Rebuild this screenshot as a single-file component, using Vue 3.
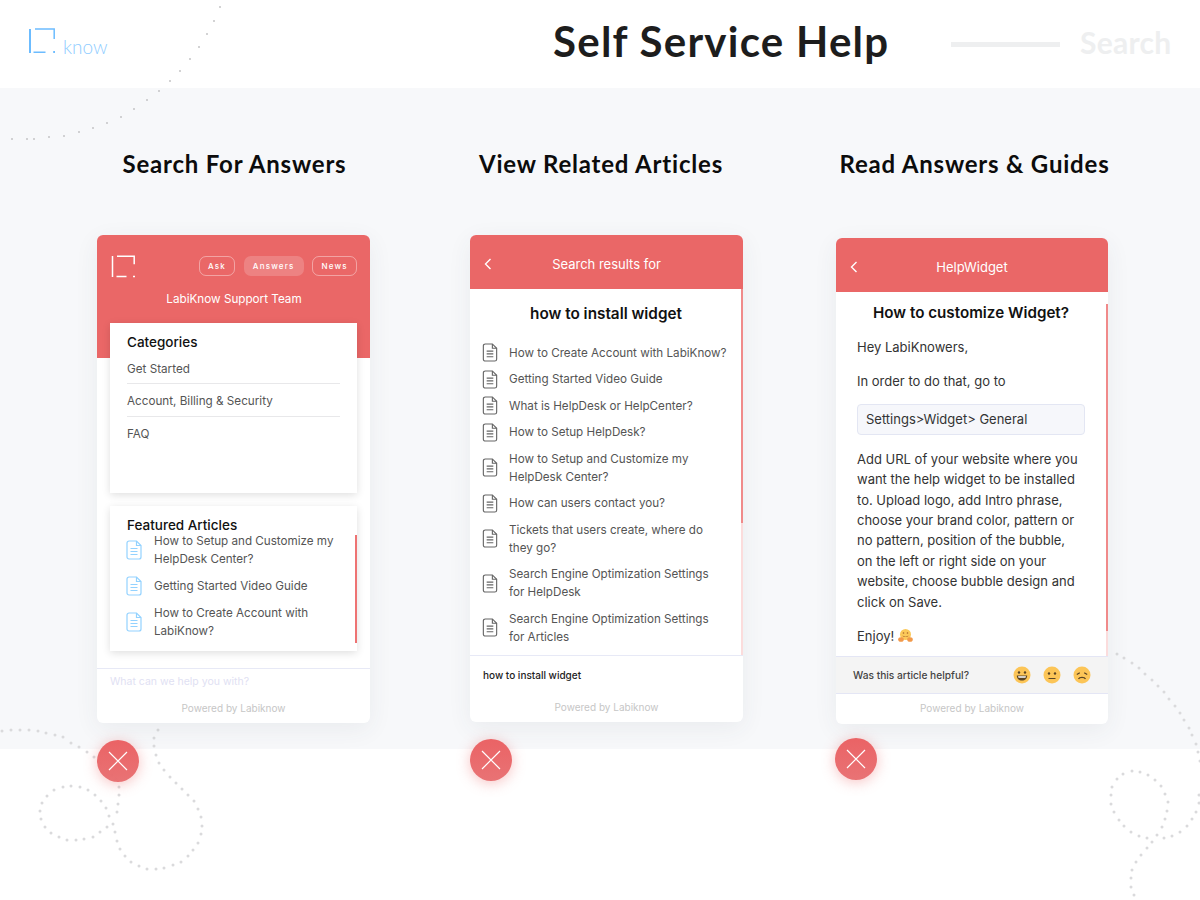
<template>
  <div class="page">
    <svg class="dots" width="1200" height="900" viewBox="0 0 1200 900">
      <circle v-for="(p, i) in thinDots" :key="'t' + i" :cx="p[0]" :cy="p[1]" r="1" fill="#c4c4c6" />
      <circle v-for="(p, i) in bigDots" :key="'b' + i" :cx="p[0]" :cy="p[1]" r="1.5" fill="#dadadc" />
    </svg>

    <header class="top">
      <div class="logo">
        <svg width="26" height="26" viewBox="0 0 26 26" fill="none" stroke="#6cbcff" stroke-width="1.500">
          <path d="M1 1v24" stroke-width="2" />
          <path d="M4.500 24.300h12M6 1h19.200v10" />
          <path d="M24.200 24h2" stroke-width="2" />
        </svg>
        <span class="logo-word">know</span>
      </div>
      <h1 class="page-title">Self Service Help</h1>
      <div class="search-line"></div>
      <div class="search-word">Search</div>
    </header>

    <main class="band">
      <section class="col col-1">
        <h2 class="col-title">Search For Answers</h2>
        <div class="phone">
          <div class="hero">
            <div class="hero-top">
              <svg width="24" height="24" viewBox="0 0 24 24" fill="none" stroke="#fff" stroke-width="1.500">
                <path d="M1.500 1v21M5.500 21.500h10M6 1.200h17.200v8" />
                <path d="M22 21.500h2" />
              </svg>
              <div class="tabs">
                <span class="tab">Ask</span>
                <span class="tab tab-on">Answers</span>
                <span class="tab">News</span>
              </div>
            </div>
            <div class="hero-name">LabiKnow Support Team</div>
          </div>
          <div class="box box-cats">
            <div class="box-title">Categories</div>
            <div v-for="c in categories" :key="c" class="cat">{{ c }}</div>
          </div>
          <div class="box box-feat">
            <div class="box-title">Featured Articles</div>
            <div class="feat-list">
              <div v-for="f in featured" :key="f" class="feat">
                <svg class="doc" width="16" height="20" viewBox="0 0 16 20" fill="none" stroke="#93d2ff" stroke-width="1.200">
                  <path d="M3 1h7.500L15 5.500V17a2 2 0 0 1-2 2H3a2 2 0 0 1-2-2V3a2 2 0 0 1 2-2z" />
                  <path d="M10.500 1v4.500H15M4.500 8.500h7M4.500 11.500h7M4.500 14.500h7" />
                </svg>
                <span>{{ f }}</span>
              </div>
            </div>
            <div class="feat-bar"></div>
          </div>
          <div class="foot foot-1">
            <div class="ask">What can we help you with?</div>
            <div class="powered">Powered by Labiknow</div>
          </div>
        </div>
        <button class="close close-1">
          <svg width="20" height="20" viewBox="0 0 20 20" stroke="#fff" stroke-width="1.200"><path d="M1 1l18 18M19 1L1 19" /></svg>
        </button>
      </section>

      <section class="col col-2">
        <h2 class="col-title">View Related Articles</h2>
        <div class="phone">
          <div class="bar">
            <svg class="back" width="8" height="12" viewBox="0 0 8 12" fill="none" stroke="#fff" stroke-width="1.400"><path d="M6.500 1L1.500 6l5 5" /></svg>
            <span>Search results for</span>
          </div>
          <div class="results">
            <div class="query">how to install widget</div>
            <div class="result-list">
              <div v-for="r in results" :key="r" class="result">
                <svg class="doc" width="16" height="19" viewBox="0 0 16 20" fill="none" stroke="#666" stroke-width="1.200">
                  <path d="M3 1h7.500L15 5.500V17a2 2 0 0 1-2 2H3a2 2 0 0 1-2-2V3a2 2 0 0 1 2-2z" />
                  <path d="M10.500 1v4.500H15M4.500 8.500h7M4.500 11.500h7M4.500 14.500h7" />
                </svg>
                <span>{{ r }}</span>
              </div>
            </div>
            <div class="scroll scroll-2"></div>
          </div>
          <div class="foot foot-2">
            <div class="typed">how to install widget</div>
            <div class="powered">Powered by Labiknow</div>
          </div>
        </div>
        <button class="close close-2">
          <svg width="20" height="20" viewBox="0 0 20 20" stroke="#fff" stroke-width="1.200"><path d="M1 1l18 18M19 1L1 19" /></svg>
        </button>
      </section>

      <section class="col col-3">
        <h2 class="col-title">Read Answers &amp; Guides</h2>
        <div class="phone">
          <div class="bar">
            <svg class="back" width="8" height="12" viewBox="0 0 8 12" fill="none" stroke="#fff" stroke-width="1.400"><path d="M6.500 1L1.500 6l5 5" /></svg>
            <span>HelpWidget</span>
          </div>
          <div class="article">
            <div class="article-title">How to customize Widget?</div>
            <p class="hey">Hey LabiKnowers,</p>
            <p class="order">In order to do that, go to</p>
            <div class="code">Settings&gt;Widget&gt; General</div>
            <p class="para">Add URL of your website where you want the help widget to be installed to. Upload logo, add Intro phrase, choose your brand color, pattern or no pattern, position of the bubble, on the left or right side on your website, choose bubble design and click on Save.</p>
            <p class="enjoy">Enjoy!
              <svg class="hug" width="15" height="15" viewBox="0 0 15 15">
                <circle cx="7.500" cy="6.500" r="5.500" fill="#fbc95a" />
                <path d="M4.500 7.500c1.500 1.500 4.500 1.500 6 0-.5 2-5.500 2-6 0z" fill="#a8632a" />
                <circle cx="5.500" cy="5" r=".8" fill="#a8632a" />
                <circle cx="9.500" cy="5" r=".8" fill="#a8632a" />
                <ellipse cx="3" cy="11.500" rx="2.800" ry="2.300" fill="#f2994a" />
                <ellipse cx="12" cy="11.500" rx="2.800" ry="2.300" fill="#f2994a" />
              </svg>
            </p>
            <div class="scroll scroll-3"></div>
          </div>
          <div class="feedback">
            <span>Was this article helpful?</span>
            <div class="faces">
              <svg width="18" height="18" viewBox="0 0 18 18">
                <circle cx="9" cy="9" r="8.500" fill="#fcc557" />
                <circle cx="6" cy="6.500" r="1.200" fill="#5a4424" />
                <circle cx="12" cy="6.500" r="1.200" fill="#5a4424" />
                <path d="M3.800 9.500h10.400c0 3-2.200 5-5.200 5s-5.200-2-5.200-5z" fill="#5a4424" />
                <path d="M5 10.300h8l-.5 1.500h-7z" fill="#fff" />
              </svg>
              <svg width="18" height="18" viewBox="0 0 18 18">
                <circle cx="9" cy="9" r="8.500" fill="#fcc557" />
                <circle cx="6" cy="7.500" r="1.200" fill="#5a4424" />
                <circle cx="12" cy="7.500" r="1.200" fill="#5a4424" />
                <path d="M5.500 12.500h7" stroke="#5a4424" stroke-width="1.200" />
              </svg>
              <svg width="18" height="18" viewBox="0 0 18 18" fill="none">
                <circle cx="9" cy="9" r="8.500" fill="#fcc557" />
                <path d="M3.800 8.500l3-1.800M14.200 8.500l-3-1.800" stroke="#5a4424" stroke-width="1.300" />
                <path d="M5.500 13c1-2.200 6-2.200 7 0" stroke="#5a4424" stroke-width="1.300" />
              </svg>
            </div>
          </div>
          <div class="foot foot-3">
            <div class="powered">Powered by Labiknow</div>
          </div>
        </div>
        <button class="close close-3">
          <svg width="20" height="20" viewBox="0 0 20 20" stroke="#fff" stroke-width="1.200"><path d="M1 1l18 18M19 1L1 19" /></svg>
        </button>
      </section>
    </main>
  </div>
</template>

<script setup>
const categories = ['Get Started', 'Account, Billing & Security', 'FAQ']
const featured = [
  'How to Setup and Customize my HelpDesk Center?',
  'Getting Started Video Guide',
  'How to Create Account with LabiKnow?'
]
const results = [
  'How to Create Account with LabiKnow?',
  'Getting Started Video Guide',
  'What is HelpDesk or HelpCenter?',
  'How to Setup HelpDesk?',
  'How to Setup and Customize my\nHelpDesk Center?',
  'How can users contact you?',
  'Tickets that users create, where do\nthey go?',
  'Search Engine Optimization Settings\nfor HelpDesk',
  'Search Engine Optimization Settings\nfor Articles'
]

// background decoration, read off the picture dot by dot
const thinDots = [
  [220, 7], [214, 21], [207, 34], [199, 47], [190, 59], [180, 71], [170, 81], [159, 91], [147, 100],
  [134, 109], [121, 117], [107, 123], [93, 128], [79, 132], [64, 136], [49, 137], [34, 139], [27, 139], [12, 139]
]
const bigDots = [
  [2, 731], [11, 730], [20, 730], [29, 730], [38, 731], [46, 733], [55, 735], [63, 737], [71, 743], [79, 747],
  [87, 752], [94, 757], [101, 763], [107, 769], [112, 775], [116, 779], [119, 787], [119, 795], [118, 804], [117, 812],
  [109, 816], [106, 808], [101, 801], [95, 795], [88, 790], [80, 787], [71, 786], [63, 787], [54, 790], [47, 796],
  [42, 803], [40, 811], [41, 819], [45, 827], [51, 833], [59, 837], [67, 840], [76, 840], [84, 839], [93, 837],
  [100, 832], [107, 827], [113, 824], [115, 832], [117, 841], [120, 849], [125, 856], [131, 862], [139, 866], [147, 869],
  [156, 869], [164, 868], [173, 865], [181, 862], [188, 856], [193, 850], [198, 843], [201, 834], [202, 826], [201, 817],
  [198, 809], [194, 801], [188, 795], [182, 789], [176, 783], [170, 777], [164, 770], [159, 763], [156, 755], [154, 746],
  [154, 738], [158, 730],
  [1117, 654], [1124, 658], [1132, 663], [1139, 668], [1145, 674], [1152, 680], [1158, 686], [1164, 692], [1169, 699],
  [1175, 706], [1180, 713], [1184, 720], [1189, 728], [1192, 735], [1196, 744], [1198, 752], [1200, 761], [1199, 795],
  [1199, 803], [1196, 812], [1192, 819], [1187, 826], [1180, 832], [1172, 836], [1164, 838], [1157, 835], [1152, 842],
  [1147, 848], [1141, 855], [1136, 862], [1132, 870], [1131, 878], [1131, 887], [1134, 895], [1162, 827], [1165, 819],
  [1167, 811], [1168, 802], [1165, 794], [1161, 786], [1155, 780], [1148, 775], [1140, 772], [1132, 771], [1123, 774],
  [1117, 779], [1112, 787], [1111, 795], [1111, 804], [1114, 812], [1119, 820], [1124, 826], [1131, 832], [1139, 836],
  [1147, 838]
]
</script>

<style>
html, body {
  margin: 0;
  background: #fff;
}
</style>

<style scoped>
.page {
  position: relative;
  width: 1200px;
  height: 900px;
  overflow: hidden;
  font-family: Inter, "Liberation Sans", sans-serif;
  color: #555;
}

.dots {
  position: absolute;
  left: 0;
  top: 0;
  z-index: 1;
  pointer-events: none;
}

.top {
  height: 88px;
  display: flex;
  align-items: center;
  background: #fff;
}

.logo {
  width: 553px;
  flex: none;
  display: flex;
  align-items: flex-end;
  gap: 8px;
  padding-left: 29px;
  box-sizing: border-box;
  margin-top: -6px;
}

.logo-word {
  font-family: Lato, sans-serif;
  font-weight: 300;
  font-size: 19px;
  line-height: 19px;
  color: #8fcdff;
  transform: translateY(2px);
}

.page-title {
  margin: -6px 0 0;
  width: 398px;
  flex: none;
  font-family: Lato, sans-serif;
  font-size: 42px;
  font-weight: 700;
  letter-spacing: 1.250px;
  color: #1d1d1d;
}

.search-line {
  width: 109px;
  height: 5px;
  background: #eeeff0;
}

.search-word {
  margin: -5px 0 0 20px;
  font-family: Lato, sans-serif;
  font-size: 30px;
  font-weight: 700;
  letter-spacing: .3px;
  color: #eeeff0;
}

.band {
  height: 661px;
  background: #f7f8fa;
  display: flex;
  align-items: flex-start;
}

.col {
  width: 273px;
  display: flex;
  flex-direction: column;
  align-items: flex-start;
  flex: none;
}

.col-1 { margin-left: 97px; }
.col-2 { margin-left: 100px; }
.col-3 { margin-left: 93px; width: 272px; }

.col-title {
  margin: 0;
  width: 100%;
  height: 147px;
  padding-top: 60px;
  box-sizing: border-box;
  text-align: center;
  white-space: nowrap;
  font-family: Lato, sans-serif;
  font-size: 24px;
  line-height: 32px;
  font-weight: 700;
  letter-spacing: .8px;
  color: #0c0c0c;
}

.col-1 .col-title { transform: translateX(1px); }
.col-2 .col-title { transform: translateX(-5.500px); }
.col-3 .col-title { height: 150px; transform: translateX(2.500px); }

.phone {
  position: relative;
  z-index: 2;
  width: 100%;
  background: #fff;
  border-radius: 6px;
  overflow: hidden;
  box-shadow: 0 6px 24px rgba(60, 70, 90, 0.07);
}

.hero {
  height: 123px;
  box-sizing: border-box;
  padding: 20px 13px 0 14px;
  background: #ea6767;
}

.hero-top {
  display: flex;
  justify-content: space-between;
  align-items: flex-start;
}

.tabs {
  display: flex;
  gap: 8.500px;
  margin-top: 1px;
}

.tab {
  height: 20px;
  padding: 0 8.200px;
  box-sizing: border-box;
  border: 1px solid rgba(255, 255, 255, 0.4);
  border-radius: 7px;
  font-size: 8px;
  line-height: 18px;
  font-weight: 500;
  letter-spacing: 1.200px;
  color: #fff;
}

.tab-on {
  background: rgba(255, 255, 255, 0.18);
  border-color: transparent;
}

.hero-name {
  margin-top: 12px;
  text-align: center;
  font-size: 11.700px;
  line-height: 16px;
  color: #fff;
}

.box {
  position: relative;
  margin: 0 13px;
  box-sizing: border-box;
  background: #fff;
  box-shadow: 0 2px 8px rgba(0, 0, 0, 0.13);
}

.box-cats {
  margin-top: -35px;
  height: 170px;
  padding: 10.500px 17px 0;
}

.box-cats .box-title { margin-bottom: 1px; }

.box-feat {
  margin-top: 13px;
  height: 145px;
  padding: 11px 17px 0;
}

.box-title {
  font-size: 13.500px;
  line-height: 17px;
  font-weight: 500;
  color: #111;
}

.cat {
  height: 32.500px;
  box-sizing: border-box;
  padding-top: 9px;
  font-size: 11.700px;
  line-height: 16px;
  border-bottom: 1px solid #e8e8ea;
}

.cat:last-child { border-bottom: 0; }

.feat-list {
  display: flex;
  flex-direction: column;
  gap: 9px;
  margin: -2px 0 0 -1px;
}

.feat {
  display: flex;
  align-items: center;
  gap: 12px;
  font-size: 11.650px;
  line-height: 18px;
}

.doc {
  flex: none;
  margin: -1px 0;
}

.feat-bar {
  position: absolute;
  right: 0;
  top: 29px;
  bottom: 8px;
  width: 2px;
  background: #ee7373;
}

.foot {
  box-sizing: border-box;
  border-top: 1px solid #e7e9f6;
}

.foot-1 {
  margin-top: 17px;
  height: 55px;
  padding: 6px 13px 0;
}

.ask {
  font-size: 10.500px;
  line-height: 14px;
  color: #dfe1f3;
}

.powered {
  text-align: center;
  font-size: 10px;
  line-height: 14px;
  color: #c6c6c6;
}

.foot-1 .powered { margin-top: 12px; }

.bar {
  position: relative;
  height: 54px;
  padding-top: 3px;
  box-sizing: border-box;
  display: flex;
  align-items: center;
  justify-content: center;
  background: #ea6767;
  font-size: 13px;
  color: #fff;
}

.back {
  position: absolute;
  left: 13.500px;
  top: 23px;
}

.results {
  position: relative;
  height: 366px;
  box-sizing: border-box;
  padding: 16px 12px 0;
}

.query {
  margin-bottom: 20.700px;
  padding-right: 1px;
  text-align: center;
  font-size: 15.300px;
  line-height: 18px;
  font-weight: 600;
  color: #111;
}

.result-list {
  display: flex;
  flex-direction: column;
  gap: 8.500px;
}

.result {
  display: flex;
  align-items: center;
  gap: 11px;
  font-size: 11.650px;
  line-height: 18px;
  color: #555;
  white-space: pre-line;
}

.scroll {
  position: absolute;
  right: 0;
  width: 2px;
}

.scroll-2 {
  top: 0;
  bottom: 0;
  background: linear-gradient(#f08a8a 0, #f08a8a 64%, #fbdcdc 64%);
}

.scroll-3 {
  top: 12px;
  bottom: 0;
  background: linear-gradient(#f08a8a 0, #f08a8a 93%, #fbdcdc 93%);
}

.foot-2 {
  height: 67px;
  padding: 12px 13px 0;
}

.typed {
  font-size: 10px;
  line-height: 14px;
  font-weight: 500;
  color: #222;
}

.foot-2 .powered { margin-top: 18px; }

.article {
  position: relative;
  height: 364px;
  box-sizing: border-box;
  padding: 11px 21px 0;
  font-size: 13px;
  line-height: 20.400px;
  color: #333;
}

.article-title {
  margin: 0 -10px 14px;
  padding-right: 2px;
  text-align: center;
  font-size: 15.200px;
  line-height: 20px;
  font-weight: 600;
  color: #111;
}

.article p { margin: 0; }
.article .order { margin-top: 14px; }

.code {
  margin-top: 12px;
  height: 31px;
  width: 228px;
  box-sizing: border-box;
  padding-left: 8px;
  line-height: 29px;
  background: #f6f7fb;
  border: 1px solid #e3e6f3;
  border-radius: 4px;
}

.article .para {
  margin-top: 14px;
  width: 225px;
}

.article .enjoy { margin-top: 14px; }

.hug { vertical-align: -2px; }

.feedback {
  height: 38px;
  display: flex;
  align-items: center;
  justify-content: space-between;
  padding: 0 17px;
  box-sizing: border-box;
  background: #f4f4f4;
  border-top: 1px solid #e4e6f5;
  border-bottom: 1px solid #e4e6f5;
  font-size: 10.200px;
  font-weight: 500;
  color: #444;
}

.faces {
  display: flex;
  gap: 12px;
}

.foot-3 {
  height: 30px;
  padding-top: 7px;
  border-top: 0;
}

.close {
  position: relative;
  z-index: 2;
  margin-top: 17px;
  width: 42px;
  height: 42px;
  padding: 0;
  display: flex;
  align-items: center;
  justify-content: center;
  border: 0;
  border-radius: 50%;
  background: linear-gradient(rgba(234, 96, 98, 0.98), rgba(232, 110, 112, 0.97));
  box-shadow: 0 2px 14px rgba(234, 103, 103, 0.4);
}

.close-2 { margin-top: 17px; }
.close-3 { margin-top: 14px; margin-left: -1px; }
</style>
